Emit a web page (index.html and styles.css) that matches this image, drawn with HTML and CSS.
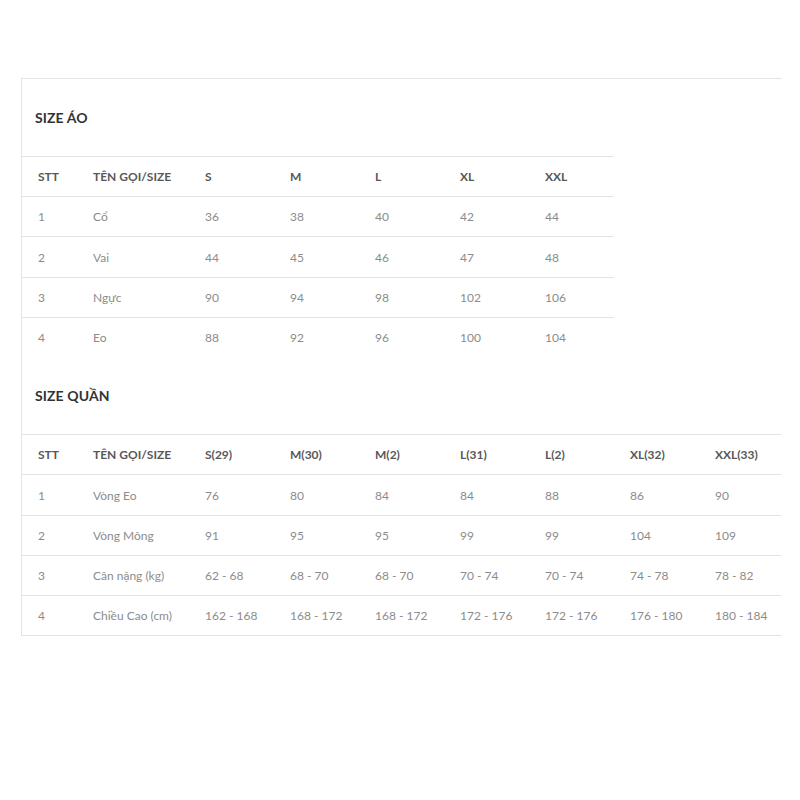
FILE: index.html
```html
<!DOCTYPE html>
<html lang="vi">
<head>
<meta charset="utf-8">
<title>Size chart</title>
<link rel="stylesheet" href="styles.css">
</head>
<body>
<div class="chart">
  <h3 class="title">SIZE ÁO</h3>
  <table class="tbl tbl-ao">
    <colgroup>
      <col class="c-stt"><col class="c-name"><col class="c-size"><col class="c-size"><col class="c-size"><col class="c-size"><col class="c-size">
    </colgroup>
    <thead>
      <tr><th>STT</th><th>TÊN GỌI/SIZE</th><th>S</th><th>M</th><th>L</th><th>XL</th><th>XXL</th></tr>
    </thead>
    <tbody>
      <tr><td>1</td><td>Cổ</td><td>36</td><td>38</td><td>40</td><td>42</td><td>44</td></tr>
      <tr><td>2</td><td>Vai</td><td>44</td><td>45</td><td>46</td><td>47</td><td>48</td></tr>
      <tr><td>3</td><td>Ngực</td><td>90</td><td>94</td><td>98</td><td>102</td><td>106</td></tr>
      <tr><td>4</td><td>Eo</td><td>88</td><td>92</td><td>96</td><td>100</td><td>104</td></tr>
    </tbody>
  </table>
  <h3 class="title">SIZE QUẦN</h3>
  <table class="tbl tbl-quan">
    <colgroup>
      <col class="c-stt"><col class="c-name"><col class="c-size"><col class="c-size"><col class="c-size"><col class="c-size"><col class="c-size"><col class="c-size"><col class="c-last">
    </colgroup>
    <thead>
      <tr><th>STT</th><th>TÊN GỌI/SIZE</th><th>S(29)</th><th>M(30)</th><th>M(2)</th><th>L(31)</th><th>L(2)</th><th>XL(32)</th><th>XXL(33)</th></tr>
    </thead>
    <tbody>
      <tr><td>1</td><td>Vòng Eo</td><td>76</td><td>80</td><td>84</td><td>84</td><td>88</td><td>86</td><td>90</td></tr>
      <tr><td>2</td><td>Vòng Mông</td><td>91</td><td>95</td><td>95</td><td>99</td><td>99</td><td>104</td><td>109</td></tr>
      <tr><td>3</td><td>Cân nặng (kg)</td><td>62 - 68</td><td>68 - 70</td><td>68 - 70</td><td>70 - 74</td><td>70 - 74</td><td>74 - 78</td><td>78 - 82</td></tr>
      <tr><td>4</td><td>Chiều Cao (cm)</td><td>162 - 168</td><td>168 - 172</td><td>168 - 172</td><td>172 - 176</td><td>172 - 176</td><td>176 - 180</td><td>180 - 184</td></tr>
    </tbody>
  </table>
</div>
</body>
</html>
```

FILE: styles.css
```css
html, body {
  margin: 0;
  padding: 0;
  background: #ffffff;
}
body {
  font-family: Lato, "Open Sans", sans-serif;
}
.chart {
  margin: 78px 0 0 21px;
  width: 760px;
  border-top: 1px solid #e3e3e3;
  border-left: 1px solid #e3e3e3;
  border-bottom: 1px solid #e3e3e3;
}
.title {
  margin: 0;
  height: 77px;
  line-height: 77px;
  padding-left: 13px;
  font-size: 14px;
  font-weight: 700;
  color: #333333;
  letter-spacing: 0.1px;
}
.tbl {
  border-collapse: separate;
  border-spacing: 0;
  table-layout: fixed;
}
.tbl-ao { width: 591px; }
.tbl-quan { width: 759px; }
.c-stt { width: 55px; }
.c-name { width: 112px; }
.c-size { width: 85px; }
.c-last { width: 82px; }
.tbl th,
.tbl td {
  text-align: left;
  padding: 12.15px 0 12.1px 16px;
  line-height: 15px;
  font-size: 12px;
  border-top: 1px solid #e3e3e3;
  white-space: nowrap;
}
.tbl th {
  font-weight: 700;
  color: #585858;
}
.tbl td {
  font-weight: 400;
  color: #8c8c8c;
}
```
